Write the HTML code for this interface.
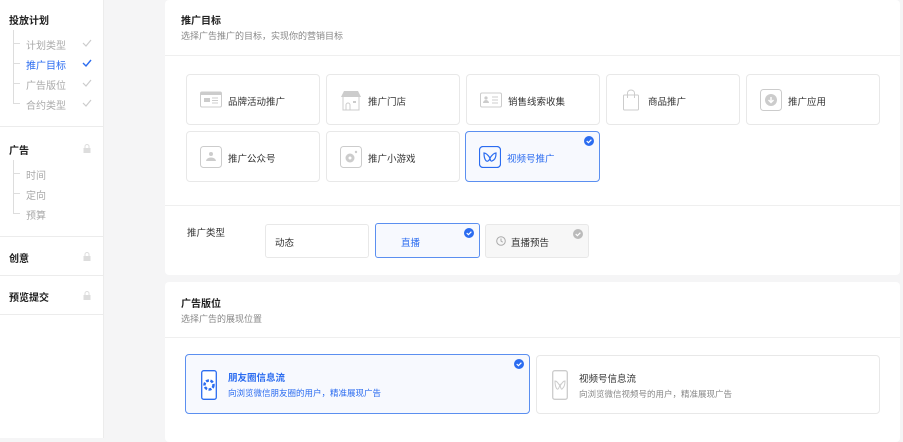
<!DOCTYPE html>
<html><head><meta charset="utf-8"><style>
*{box-sizing:border-box;margin:0;padding:0}
body{width:903px;height:438px;overflow:hidden;background:#f5f5f6;font-family:"Liberation Sans","Noto Sans CJK SC",sans-serif;font-size:10px;color:#333;position:relative}
.abs{position:absolute}
.side{left:0;top:0;width:104px;height:438px;background:#fff;border-right:1px solid #ececec}
.sh{left:9px;font-weight:bold;font-size:10px;color:#222}
.si{left:26px;font-size:10px;color:#aaa}
.hr{left:0;width:104px;height:1px;background:#ececec}
.tl{left:13px;width:1px;background:#ddd}
.tk{left:13px;width:7px;height:1px;background:#ddd}
.ck{left:82px;width:10px;height:10px}
.lock{left:83px;width:8px;height:9px}
.card{background:#fff;border-radius:4px}
.t{font-weight:bold;font-size:10px;color:#222}
.st{font-size:9px;color:#888}
.opt{border:1px solid #e8e8e8;border-radius:4px;background:#fff;width:134px;height:51px}
.opt .ic{position:absolute;left:13px;top:14px;width:22px;height:22px}
.opt .lb{position:absolute;left:41px;top:19px;font-size:9.5px;color:#333}
.sel{border-color:#5b8ff0;background:#f7f9fe}
.badge{position:absolute;width:10px;height:10px;border-radius:50%;background:#2b6cf0}
</style></head><body>
<div class="abs side">
<div class="abs sh" style="top:12px">投放计划</div>
<div class="abs tl" style="top:30px;height:73px"></div>
<div class="abs tk" style="top:43px"></div><div class="abs tk" style="top:63px"></div><div class="abs tk" style="top:83px"></div><div class="abs tk" style="top:103px"></div>
<div class="abs si" style="top:37px">计划类型</div>
<div class="abs si" style="top:57px;color:#2b6cf0">推广目标</div>
<div class="abs si" style="top:77px">广告版位</div>
<div class="abs si" style="top:97px">合约类型</div>
<svg class="abs ck" style="top:38px" viewBox="0 0 10 10"><path d="M1 5l3 3 5-6" fill="none" stroke="#ccc" stroke-width="1.2"/></svg>
<svg class="abs ck" style="top:58px" viewBox="0 0 10 10"><path d="M1 5l3 3 5-6" fill="none" stroke="#2b6cf0" stroke-width="1.4"/></svg>
<svg class="abs ck" style="top:78px" viewBox="0 0 10 10"><path d="M1 5l3 3 5-6" fill="none" stroke="#ccc" stroke-width="1.2"/></svg>
<svg class="abs ck" style="top:98px" viewBox="0 0 10 10"><path d="M1 5l3 3 5-6" fill="none" stroke="#ccc" stroke-width="1.2"/></svg>
<div class="abs hr" style="top:126px"></div>
<div class="abs sh" style="top:142px">广告</div>
<div class="abs tl" style="top:160px;height:53px"></div>
<div class="abs tk" style="top:173px"></div><div class="abs tk" style="top:193px"></div><div class="abs tk" style="top:213px"></div>
<div class="abs si" style="top:167px">时间</div>
<div class="abs si" style="top:187px">定向</div>
<div class="abs si" style="top:207px">预算</div>
<div class="abs hr" style="top:236px"></div>
<div class="abs sh" style="top:250px">创意</div>
<div class="abs hr" style="top:275px"></div>
<div class="abs sh" style="top:289px">预览提交</div>
<div class="abs hr" style="top:314px"></div>
<svg class="abs lock" style="top:144px" viewBox="0 0 8 9"><path d="M2 4V2.5a2 2 0 014 0V4" fill="none" stroke="#ddd"/><rect x="0.5" y="4" width="7" height="5" fill="#ddd"/></svg>
<svg class="abs lock" style="top:252px" viewBox="0 0 8 9"><path d="M2 4V2.5a2 2 0 014 0V4" fill="none" stroke="#ddd"/><rect x="0.5" y="4" width="7" height="5" fill="#ddd"/></svg>
<svg class="abs lock" style="top:291px" viewBox="0 0 8 9"><path d="M2 4V2.5a2 2 0 014 0V4" fill="none" stroke="#ddd"/><rect x="0.5" y="4" width="7" height="5" fill="#ddd"/></svg>
</div>

<div class="abs card" style="left:165px;top:0;width:735px;height:275px">
<div class="abs t" style="left:16px;top:12px">推广目标</div>
<div class="abs st" style="left:16px;top:29px">选择广告推广的目标，实现你的营销目标</div>
<div class="abs" style="left:0;top:55px;width:735px;height:1px;background:#efefef"></div>
<div class="abs" style="left:0;top:205px;width:735px;height:1px;background:#efefef"></div>
</div>

<div class="abs opt" style="left:186px;top:74px"><svg class="ic" viewBox="0 0 22 22"><rect x="0.5" y="3" width="21" height="15" rx="1.5" fill="#fff" stroke="#ccc"/><rect x="0.5" y="3" width="21" height="3" fill="#ccc"/><rect x="4" y="9" width="6" height="4" fill="#ccc"/><path d="M12 9h6M12 11.5h6M12 14h6" stroke="#ccc"/></svg><span class="lb">品牌活动推广</span></div>
<div class="abs opt" style="left:326px;top:74px"><svg class="ic" viewBox="0 0 22 22"><path d="M3 8v13h16V8" fill="none" stroke="#ccc"/><path d="M1 8l3-6h14l3 6z" fill="#ccc"/><path d="M6 21v-5a2 2 0 014 0v5" fill="none" stroke="#ccc"/><rect x="13" y="12" width="3" height="2" fill="#ccc"/></svg><span class="lb">推广门店</span></div>
<div class="abs opt" style="left:466px;top:74px"><svg class="ic" viewBox="0 0 22 22"><rect x="0.5" y="4" width="21" height="14" rx="1.5" fill="none" stroke="#ccc"/><circle cx="6" cy="9" r="1.6" fill="#ccc"/><path d="M3 14a3 3 0 016 0z" fill="#ccc"/><path d="M12 8h6M12 11h6M12 14h6" stroke="#ccc"/></svg><span class="lb">销售线索收集</span></div>
<div class="abs opt" style="left:606px;top:74px"><svg class="ic" viewBox="0 0 22 22"><rect x="3.5" y="6" width="15" height="15" rx="1" fill="none" stroke="#ccc"/><path d="M7.5 9V4a3.5 3 0 017 0v5" fill="none" stroke="#ccc"/></svg><span class="lb">商品推广</span></div>
<div class="abs opt" style="left:746px;top:74px"><svg class="ic" viewBox="0 0 22 22"><rect x="0.5" y="0.5" width="21" height="21" rx="3" fill="none" stroke="#ccc"/><circle cx="11" cy="11" r="6" fill="#ccc"/><path d="M11 8v5M8.5 11l2.5 2.5 2.5-2.5" fill="none" stroke="#fff" stroke-width="1.4"/></svg><span class="lb">推广应用</span></div>
<div class="abs opt" style="left:186px;top:131px"><svg class="ic" viewBox="0 0 22 22"><rect x="0.5" y="0.5" width="21" height="21" rx="3" fill="none" stroke="#ccc"/><circle cx="11" cy="8" r="2" fill="#ccc"/><path d="M6 15a5 3.5 0 0110 0z" fill="#ccc"/></svg><span class="lb">推广公众号</span></div>
<div class="abs opt" style="left:326px;top:131px"><svg class="ic" viewBox="0 0 22 22"><rect x="0.5" y="0.5" width="21" height="21" rx="3" fill="none" stroke="#ccc"/><circle cx="10" cy="12" r="4.5" fill="#ccc"/><circle cx="10" cy="12" r="1.5" fill="#fff"/><circle cx="16" cy="6" r="1.2" fill="#ccc"/></svg><span class="lb">推广小游戏</span></div>
<div class="abs opt sel" style="left:465px;top:131px;width:135px"><svg class="ic" viewBox="0 0 22 22"><rect x="0.5" y="0.5" width="21" height="21" rx="3.5" fill="none" stroke="#2b6cf0" stroke-width="1.2"/><path d="M5 7c0 6 2 9 4 8s2-4 2-4 0 5 2 4 4-2 4-8c-2 0-4 2-6 5-2-3-4-5-6-5z" fill="none" stroke="#2b6cf0" stroke-width="1.2"/></svg><span class="lb" style="color:#2b6cf0">视频号推广</span>
<svg class="badge" style="right:5px;top:4px" viewBox="0 0 10 10"><path d="M2.7 5l1.7 1.7 3-3" fill="none" stroke="#fff" stroke-width="1.2"/></svg></div>

<div class="abs" style="left:187px;top:225px;font-size:9.5px;color:#333">推广类型</div>
<div class="abs" style="left:265px;top:224px;width:104px;height:34px;border:1px solid #e8e8e8;border-radius:3px;background:#fff"><span class="abs" style="left:9px;top:10px;font-size:9.5px">动态</span></div>
<div class="abs" style="left:375px;top:223px;width:105px;height:35px;border:1px solid #5b8ff0;border-radius:3px;background:#f7f9fe"><span class="abs" style="left:25px;top:11px;font-size:9.5px;color:#2b6cf0">直播</span><svg class="badge" style="right:5px;top:4px" viewBox="0 0 10 10"><path d="M2.7 5l1.7 1.7 3-3" fill="none" stroke="#fff" stroke-width="1.2"/></svg></div>
<div class="abs" style="left:485px;top:224px;width:104px;height:34px;border:1px solid #e8e8e8;border-radius:3px;background:#f7f7f7"><svg class="abs" style="left:10px;top:11px;width:10px;height:10px" viewBox="0 0 10 10"><circle cx="5" cy="5" r="4.3" fill="none" stroke="#aaa"/><path d="M5 2.5V5l1.7 1.2" fill="none" stroke="#aaa"/></svg><span class="abs" style="left:25px;top:10px;font-size:9.5px">直播预告</span><svg class="badge" style="right:5px;top:4px;background:#bbb" viewBox="0 0 10 10"><path d="M2.7 5l1.7 1.7 3-3" fill="none" stroke="#fff" stroke-width="1.2"/></svg></div>

<div class="abs card" style="left:165px;top:282px;width:735px;height:160px">
<div class="abs t" style="left:16px;top:13px">广告版位</div>
<div class="abs st" style="left:16px;top:30px">选择广告的展现位置</div>
<div class="abs" style="left:0;top:55px;width:735px;height:1px;background:#efefef"></div>
</div>
<div class="abs" style="left:185px;top:354px;width:345px;height:60px;border:1px solid #5b8ff0;border-radius:4px;background:#f7f9fe">
<svg class="abs" style="left:15px;top:15px;width:16px;height:30px" viewBox="0 0 16 30"><rect x="0.7" y="0.7" width="14.6" height="28.6" rx="2" fill="#fff" stroke="#2b6cf0" stroke-width="1.3"/><circle cx="8" cy="15" r="4.5" fill="none" stroke="#2b6cf0" stroke-width="2.5" stroke-dasharray="3 1.5"/></svg>
<span class="abs" style="left:42px;top:15px;font-size:9.5px;color:#2b6cf0;font-weight:bold">朋友圈信息流</span>
<span class="abs" style="left:42px;top:32px;font-size:8.5px;color:#2b6cf0">向浏览微信朋友圈的用户，精准展现广告</span>
<svg class="badge" style="right:5px;top:4px" viewBox="0 0 10 10"><path d="M2.7 5l1.7 1.7 3-3" fill="none" stroke="#fff" stroke-width="1.2"/></svg></div>
<div class="abs" style="left:536px;top:355px;width:344px;height:59px;border:1px solid #e8e8e8;border-radius:4px;background:#fff">
<svg class="abs" style="left:15px;top:14px;width:16px;height:30px" viewBox="0 0 16 30"><rect x="0.7" y="0.7" width="14.6" height="28.6" rx="2" fill="#fff" stroke="#ccc" stroke-width="1.3"/><path d="M3 11c0 6 2 9 3 8s2-4 2-4 1 5 2 4 3-2 3-8c-2 0-3 2-5 5-2-3-3-5-5-5z" fill="none" stroke="#ccc"/></svg>
<span class="abs" style="left:42px;top:15px;font-size:9.5px;color:#333">视频号信息流</span>
<span class="abs" style="left:42px;top:32px;font-size:8.5px;color:#888">向浏览微信视频号的用户，精准展现广告</span></div>
</body></html>
